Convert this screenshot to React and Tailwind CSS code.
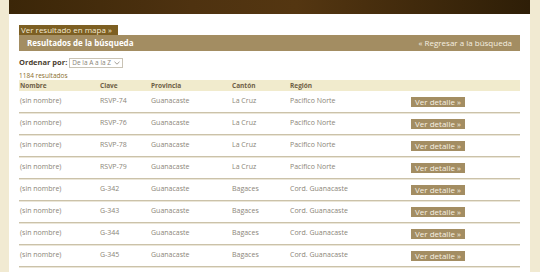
import React from "react";

const rows = [
  ["(sin nombre)", "RSVP-74", "Guanacaste", "La Cruz", "Pacifico Norte"],
  ["(sin nombre)", "RSVP-76", "Guanacaste", "La Cruz", "Pacifico Norte"],
  ["(sin nombre)", "RSVP-78", "Guanacaste", "La Cruz", "Pacifico Norte"],
  ["(sin nombre)", "RSVP-79", "Guanacaste", "La Cruz", "Pacifico Norte"],
  ["(sin nombre)", "G-342", "Guanacaste", "Bagaces", "Cord. Guanacaste"],
  ["(sin nombre)", "G-343", "Guanacaste", "Bagaces", "Cord. Guanacaste"],
  ["(sin nombre)", "G-344", "Guanacaste", "Bagaces", "Cord. Guanacaste"],
  ["(sin nombre)", "G-345", "Guanacaste", "Bagaces", "Cord. Guanacaste"],
];

export default function App() {
  return (
    <div
      className="w-[540px] h-[272px] overflow-hidden bg-[#f1ead2] px-[9px]"
      style={{ fontFamily: '"Open Sans", "DejaVu Sans", sans-serif' }}
    >
      <div className="h-full bg-white w-[521px]">
        <div className="h-[14px] bg-[linear-gradient(90deg,#3b2608_0%,#4e3210_35%,#543611_55%,#2e1e07_100%)]" />
        <div className="px-[10px] pt-[11px]">
          <div className="flex">
            <div className="h-[10px] bg-[#7d5f22] text-[#f3ead3] text-[8px] leading-[10px] px-[2px] w-[99px]">
              Ver resultado en mapa »
            </div>
          </div>
          <div className="h-[16px] bg-[#a38d62] flex items-center justify-between px-[8px] text-white text-[8px]">
            <span className="font-bold">Resultados de la búsqueda</span>
            <span className="text-[#f5efe0]">« Regresar a la búsqueda</span>
          </div>
          <div className="flex items-center mt-[7px] h-[10px] gap-[2px]">
            <span className="text-[7.5px] font-bold text-[#4a4030]">Ordenar por:</span>
            <div className="h-[10px] w-[54px] border border-[#c9c3b5] flex items-center px-[2px] text-[6.5px] text-[#8a8478] justify-between">
              <span>De la A a la Z</span>
              <svg width="6" height="4" viewBox="0 0 6 4">
                <path d="M0.5 0.8 L3 3.2 L5.5 0.8" stroke="#8a8478" strokeWidth="0.8" fill="none" />
              </svg>
            </div>
          </div>
          <div className="mt-[3px] text-[6.5px] leading-[9px] text-[#8a6d2a]">1184 resultados</div>
          <div className="h-[11px] bg-[#f1ebcd] flex items-center text-[6.5px] font-bold text-[#6e6046]">
            <span className="w-[81px] pl-[1px]">Nombre</span>
            <span className="w-[51px]">Clave</span>
            <span className="w-[81px]">Provincia</span>
            <span className="w-[58px]">Cantón</span>
            <span className="w-[121px]">Región</span>
          </div>
          {rows.map((r, i) => (
            <div
              key={i}
              className="h-[22px] flex items-center text-[7px] text-[#8b8578] border-b border-[#cbc2a9] shadow-[0_1px_0_#ebe6d8]"
            >
              <span className="w-[81px] pl-[1px]">{r[0]}</span>
              <span className="w-[51px]">{r[1]}</span>
              <span className="w-[81px]">{r[2]}</span>
              <span className="w-[58px]">{r[3]}</span>
              <span className="w-[121px]">{r[4]}</span>
              <span className="w-[54px] h-[10px] bg-[#a38d62] text-[#f6f0e2] text-[8px] leading-[10px] text-center">
                Ver detalle »
              </span>
            </div>
          ))}
          <div className="h-[22px] flex items-center">
            <span className="ml-[392px] w-[54px] h-[10px] bg-[#a38d62]" />
          </div>
        </div>
      </div>
    </div>
  );
}
